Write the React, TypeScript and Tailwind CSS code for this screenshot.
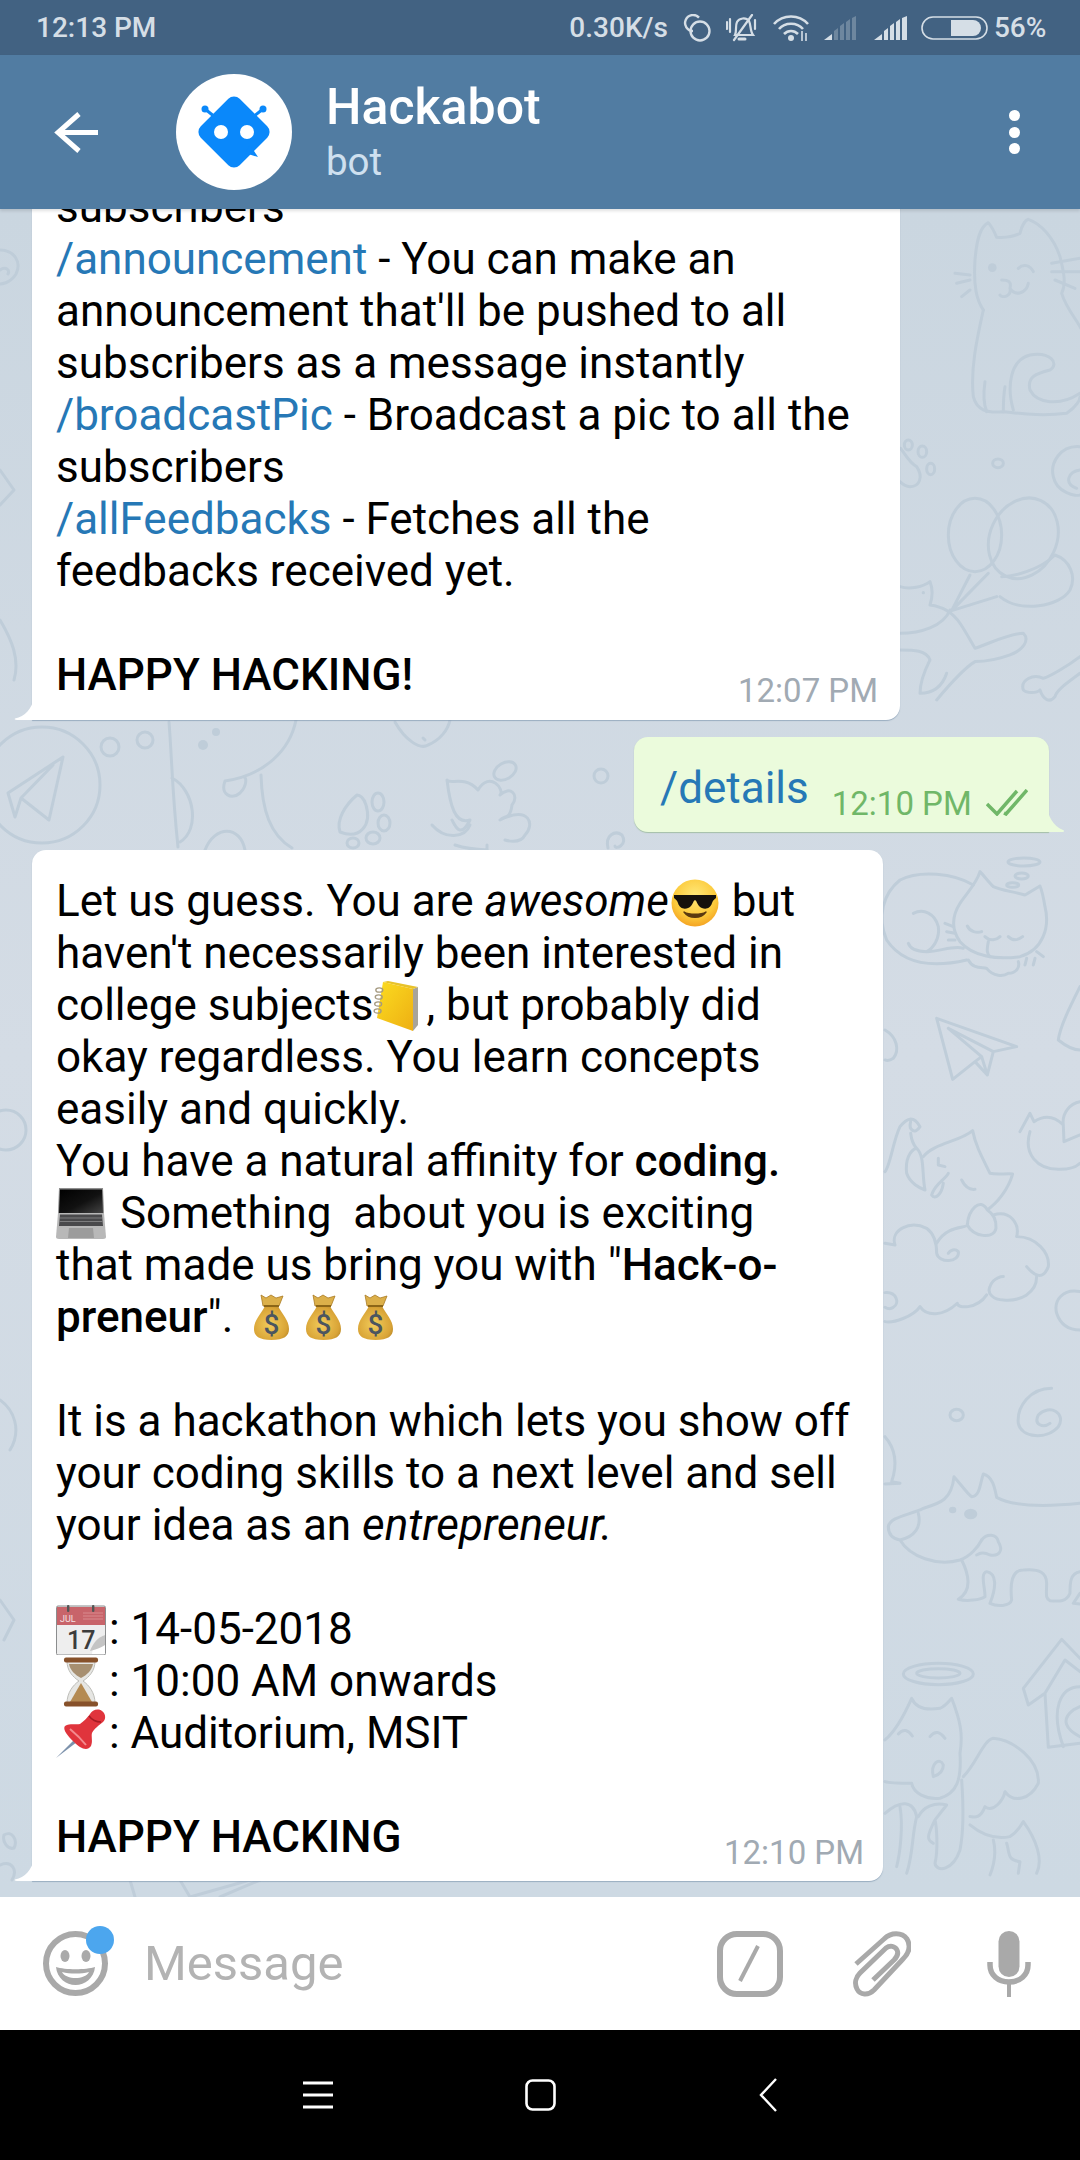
import React from "react";

const BG_STROKE = "#bfcdd9";

// wallpaper, drawn in screen coordinates (the chat area starts at y=209)
function Wallpaper() {
  return (
    <svg
      className="absolute inset-0"
      width="1080"
      height="1688"
      viewBox="0 209 1080 1688"
      fill="none"
      stroke={BG_STROKE}
      strokeWidth="3"
      strokeLinecap="round"
      strokeLinejoin="round"
    >
      {/* top right column */}
      <g transform="translate(880,200) scale(0.3333)" strokeWidth="9">
        <path d="M310 330C290 300 280 260 285 180C290 120 300 80 325 68C335 80 345 100 350 112C380 115 400 110 420 100C425 80 435 60 445 58C480 70 520 110 540 170C550 210 560 250 545 280C560 330 600 370 610 400" />
        <path d="M310 330C295 400 270 500 280 590C290 630 320 640 370 635C420 640 480 650 560 640C590 620 600 600 600 590" />
        <path d="M400 630C380 560 390 480 450 465C510 455 540 490 510 510C470 520 440 530 450 570C470 610 540 620 600 580" />
        <path d="M315 545C310 580 310 610 320 635M375 560C370 590 370 620 370 635" />
        <circle cx="337" cy="203" r="13" fill={BG_STROKE} stroke="none" />
        <path d="M415 205C430 190 450 195 460 215M365 240C385 240 395 245 390 265C395 290 365 295 360 285M390 265C405 290 440 280 445 250" />
        <path d="M225 220L270 225M230 250L270 240M245 290L270 270M515 190L600 175M515 215L600 215M525 240L585 265" />
        <path d="M62 745C80 770 90 790 110 800C130 830 120 860 90 860C75 860 65 850 60 845" />
        <ellipse cx="85" cy="735" rx="12" ry="15" />
        <ellipse cx="127" cy="755" rx="13" ry="17" />
        <ellipse cx="152" cy="807" rx="12" ry="17" />
        <ellipse cx="354" cy="790" rx="16" ry="13" />
        <path d="M600 740C540 735 510 790 520 830C530 880 590 890 600 885M600 810C565 815 550 850 590 865" />
        <ellipse cx="285" cy="1005" rx="80" ry="110" />
        <ellipse cx="430" cy="1015" rx="100" ry="125" transform="rotate(25 430 1015)" />
        <path d="M365 1130C400 1130 480 1110 525 1065C570 1080 590 1130 570 1170C540 1220 420 1240 360 1190" />
        <path d="M270 1125L215 1232L325 1120M350 1190L215 1232" />
        <path d="M60 1160C90 1170 130 1160 150 1145C160 1170 155 1200 150 1215C190 1220 220 1240 240 1270C260 1300 270 1320 285 1345C330 1330 390 1300 430 1300C450 1320 430 1350 390 1365C350 1380 310 1385 285 1385C260 1400 220 1440 170 1500" />
        <path d="M60 1300C120 1300 190 1280 210 1230M60 1350C100 1350 140 1350 150 1380C130 1420 120 1450 120 1480M200 1420C190 1450 170 1480 120 1480" />
        <path d="M600 1370C560 1400 510 1430 490 1435C460 1420 420 1440 430 1470C440 1480 470 1480 480 1470C490 1500 510 1510 525 1490C530 1470 560 1450 600 1420" />
        <circle cx="130" cy="1178" r="5" fill={BG_STROKE} stroke="none" />
      </g>

      {/* middle right column */}
      <g transform="translate(880,820) scale(0.3333)" strokeWidth="9">
        <path d="M280 195C220 160 120 150 60 180C10 220 -10 290 20 360C60 420 130 450 260 420" />
        <path d="M300 155C290 190 260 220 240 250C215 290 215 330 240 365C280 410 350 420 420 410C490 390 510 320 495 260C490 230 485 210 480 198C460 210 445 220 435 225C400 215 360 210 340 200C325 185 310 165 300 155" />
        <path d="M100 280C130 265 165 280 175 320C180 355 160 385 140 395C110 395 90 385 85 370M140 395C180 395 220 375 250 385" />
        <ellipse cx="432" cy="126" rx="48" ry="12" />
        <ellipse cx="425" cy="168" rx="20" ry="9" />
        <ellipse cx="398" cy="195" rx="18" ry="7" />
        <path d="M262 318C270 335 290 340 305 335M385 350C400 365 415 360 428 350M315 350C330 365 350 360 360 350M325 365C320 390 320 400 330 410" />
        <path d="M265 420C280 450 310 440 320 445C340 470 370 470 385 460C410 460 420 440 415 425" />
        <path d="M195 310L220 320M200 335L225 340M205 360L225 360M440 415L435 435M465 415L460 435M470 395L490 410" />
        <path d="M170 595L410 680L340 695L322 765L285 725L218 778ZM205 625L340 695M205 625L305 710L285 725M305 710L322 765" />
        <path d="M600 500C570 560 540 620 535 660C560 680 580 690 600 690" />
        <path d="M420 935L450 880L462 905C500 880 530 895 550 915C545 880 570 850 600 845M450 935C430 1000 470 1050 540 1048C570 1048 590 1040 600 1030M550 915L552 965L600 945" />
        <path d="M15 1055C30 1040 40 960 60 920C80 895 100 885 120 920C105 945 85 930 92 905M92 940C95 965 100 975 110 985C90 990 75 1020 80 1060C90 1090 120 1105 135 1110C125 1060 135 1010 110 985M130 1010C160 970 240 965 278 932C285 970 300 1000 330 1060C350 1065 380 1060 398 1062C385 1110 350 1150 322 1170C300 1130 265 1170 262 1215C280 1250 340 1260 348 1225C350 1190 330 1175 322 1170" />
        <path d="M175 1015L175 1035L195 1040M245 1080C255 1100 270 1110 285 1108M205 1060C195 1080 165 1090 155 1125C165 1140 185 1125 190 1090" />
        <path d="M15 1270L45 1275C30 1230 90 1200 140 1225C160 1240 170 1265 170 1300C175 1330 240 1330 235 1295C225 1285 210 1290 205 1300M170 1270C200 1215 260 1225 262 1215M340 1185C390 1170 420 1210 410 1250C470 1250 510 1300 505 1340C490 1380 465 1370 440 1340M470 1370C470 1420 420 1445 370 1440C340 1440 320 1420 330 1400C340 1370 370 1370 370 1370M320 1425C290 1470 230 1465 232 1450C190 1490 140 1490 120 1460C100 1490 40 1510 15 1505" />
        <path d="M15 1418C50 1415 60 1450 40 1462C30 1470 20 1465 15 1462" />
        <path d="M15 630C50 650 60 690 40 715C30 722 20 722 15 720" />
        <path d="M600 1415C550 1405 520 1440 530 1480C540 1510 560 1530 600 1530" />
      </g>

      {/* bottom right column */}
      <g transform="translate(880,1360) scale(0.3333)" strokeWidth="9">
        <ellipse cx="230" cy="165" rx="20" ry="17" />
        <path d="M515 85C450 85 410 140 415 190C425 235 500 240 535 200C560 160 510 130 475 165C460 195 490 205 510 190" />
        <path d="M15 230C50 270 50 320 35 365L60 370L15 372" />
        <path d="M25 500C30 470 90 465 130 445C180 430 215 420 222 350C240 370 265 405 275 410C300 410 300 370 310 342C340 350 345 390 350 412C400 440 500 440 600 430" />
        <path d="M115 460C125 500 105 530 60 540C35 535 25 520 25 500M60 540C90 590 170 620 240 600C270 590 295 560 305 540" />
        <ellipse cx="218" cy="450" rx="11" ry="10" fill={BG_STROKE} stroke="none" />
        <ellipse cx="272" cy="462" rx="20" ry="16" fill={BG_STROKE} stroke="none" />
        <path d="M305 540C320 520 350 520 355 545C370 570 360 590 330 585C310 575 300 580 290 585" />
        <path d="M245 600C265 640 280 690 235 718C260 725 300 720 315 710C315 680 300 640 320 635C350 640 350 680 330 730C350 740 390 740 395 720C390 670 395 630 430 630C480 625 500 640 500 670C500 700 495 715 510 722C540 725 560 725 570 700C570 670 570 640 600 635M600 700L580 730L600 732" />
        <ellipse cx="175" cy="942" rx="105" ry="32" />
        <ellipse cx="175" cy="940" rx="65" ry="14" />
        <path d="M600 895L545 838L430 985L445 1035L495 1000L505 1162L600 1150M600 935L555 900L495 1000" />
        <path d="M600 980C540 980 510 1050 550 1160M600 1130C560 1110 540 1080 580 1050L600 1040" />
        <path d="M15 1140C50 1110 75 1060 95 1015C110 1050 150 1050 180 1045C195 1040 210 1020 215 1015C240 1080 250 1120 240 1180C245 1260 230 1300 180 1315C140 1320 100 1300 95 1270C60 1270 30 1270 15 1265" />
        <path d="M55 1122C70 1105 85 1110 97 1128M150 1130C165 1110 180 1115 195 1135M160 1250C150 1210 180 1190 190 1215C190 1235 175 1245 160 1250" />
        <path d="M250 1250C290 1210 310 1140 340 1135C400 1140 480 1200 475 1270C450 1320 400 1330 375 1295C370 1320 340 1360 315 1340C300 1380 280 1370 270 1370" />
        <path d="M245 1260C250 1330 250 1420 240 1470C220 1530 170 1540 165 1510C175 1470 170 1400 165 1380M15 1360C60 1320 100 1320 110 1370C95 1430 100 1480 80 1540M115 1370C130 1340 165 1325 200 1335L165 1380C140 1430 140 1440 160 1450M60 1340C70 1400 60 1480 50 1520" />
        <path d="M270 1395C300 1420 340 1440 390 1430C420 1410 425 1390 430 1385C470 1440 490 1500 470 1540M340 1440C350 1480 340 1520 330 1545M380 1450C390 1480 380 1500 420 1505L415 1540" />
      </g>

      {/* gap between first bubble and the third one */}
      <circle cx="42" cy="785" r="58" />
      <path d="M63 757L8 793L15 817L21 798L49 820ZM53 765L21 798" />
      <circle cx="110" cy="747" r="9" />
      <circle cx="145" cy="740" r="8" />
      <path d="M169 722C172 760 172 790 178 847M172 778C195 790 200 830 180 842" />
      <path d="M296 720C290 750 265 775 225 781C220 795 232 800 240 793C248 785 246 776 244 777M261 775C262 810 270 835 292 848M205 850C215 825 240 825 245 850" />
      <circle cx="216" cy="732" r="4" fill={BG_STROKE} stroke="none" />
      <circle cx="203" cy="745" r="5" fill={BG_STROKE} stroke="none" />
      <path d="M395 722C405 740 420 750 428 745C440 740 448 730 450 720M423 738L425 740" />
      <path d="M357 795C345 805 336 820 340 832C360 840 372 825 366 805C364 798 360 795 357 795Z" />
      <ellipse cx="378" cy="802" rx="6" ry="9" />
      <ellipse cx="384" cy="823" rx="6" ry="8" />
      <ellipse cx="373" cy="838" rx="7" ry="6" />
      <ellipse cx="353" cy="843" rx="6" ry="5" />
      <path d="M478 790C465 775 450 785 447 780C450 805 455 825 470 820C460 840 455 825 452 820M478 790C490 770 505 790 500 795C510 785 520 795 512 805C510 820 505 815 500 820C530 805 535 825 525 835C520 845 505 840 505 840" />
      <ellipse cx="505" cy="771" rx="12" ry="8" transform="rotate(-30 505 771)" />
      <path d="M432 825C445 840 465 838 470 825M455 845C470 850 490 850 487 850L487 845" />
      <circle cx="601" cy="776" r="7" />
      <path d="M608 848C605 835 615 830 622 835C628 845 615 850 615 846" />

      {/* left strip */}
      <path d="M0 250C14 250 22 262 16 274C10 284 0 284 0 284M0 270C6 266 10 270 8 274" />
      <path d="M0 470L14 490L0 505M0 620C12 640 20 660 14 680" />
      <circle cx="6" cy="1130" r="20" />
      <path d="M0 1400C14 1410 22 1430 10 1450M0 1600L14 1620L4 1640" />
      <path d="M4 1835C12 1830 18 1840 14 1848C8 1850 2 1842 4 1835M0 1865C12 1860 18 1870 12 1880" />
      <path d="M130 1880L135 1897M180 1880L190 1897L250 1880M260 1880L220 1897" />
    </svg>
  );
}

function SmileEmoji() {
  return (
    <svg className="inline-block align-[-11px] mx-[2px]" width="48" height="48" viewBox="0 0 48 48">
      <defs>
        <radialGradient id="face" cx="50%" cy="35%" r="70%">
          <stop offset="0%" stopColor="#ffe97a" />
          <stop offset="65%" stopColor="#fcc93a" />
          <stop offset="100%" stopColor="#f29a1e" />
        </radialGradient>
      </defs>
      <circle cx="24" cy="24" r="23.5" fill="url(#face)" />
      <path d="M3 16H45V19C44 20 42 21 41 24C39 31 32 31 28 27C26 25 26 22 24 21C22 22 22 25 20 27C16 31 9 31 7 24C6 21 4 20 3 19Z" fill="#15110c" />
      <path d="M13 33C18 40 30 40 35 33C30 36 18 36 13 33Z" fill="#5b3a10" stroke="#5b3a10" strokeWidth="1.4" strokeLinejoin="round" />
    </svg>
  );
}

function NotebookEmoji() {
  return (
    <svg className="inline-block align-[-11px] mr-[7px]" width="46" height="50" viewBox="0 0 46 50">
      <defs>
        <linearGradient id="nb" x1="0" y1="0" x2="1" y2="1">
          <stop offset="0%" stopColor="#fbdc20" />
          <stop offset="100%" stopColor="#eeaf13" />
        </linearGradient>
      </defs>
      <path d="M40 8L45 6V44L40 50Z" fill="#a8a49a" />
      <path d="M10 1L15 0L45 6L40 8Z" fill="#e8c22a" />
      <path d="M10 1L40 8V50L4 37Z" fill="url(#nb)" />
      {[9, 16, 23, 30].map((y) => (
        <ellipse key={y} cx={7 - y * 0.08} cy={y} rx="3.5" ry="2.2" fill="none" stroke="#a59a80" strokeWidth="1.3" />
      ))}
    </svg>
  );
}

function LaptopEmoji() {
  return (
    <svg className="inline-block align-[-11px] mr-[3px]" width="50" height="51" viewBox="0 0 50 51">
      <defs>
        <linearGradient id="lp" x1="0" y1="0" x2="1" y2="1">
          <stop offset="0%" stopColor="#000" />
          <stop offset="55%" stopColor="#111" />
          <stop offset="100%" stopColor="#444" />
        </linearGradient>
      </defs>
      <path d="M3 0H47L48 25H2Z" fill="#8f8f8f" />
      <path d="M4 1.5H46L47 25H3Z" fill="url(#lp)" />
      <path d="M2 25H48L50 49C50 50 49 51 47 51H3C1 51 0 50 0 49Z" fill="#b8b8b8" />
      <path d="M4 26.5H46L47 38H3Z" fill="#49494b" />
      <path d="M4 30H46M3.6 33.5H46.4" stroke="#8a8a8c" strokeWidth="0.8" />
      <path d="M13 40H37L38 50H12Z" fill="#9c9c9c" />
    </svg>
  );
}

function MoneyBag({ uid }: { uid: string }) {
  return (
    <svg className="inline-block align-[-8px]" width="41" height="46" viewBox="1 0 41 46">
      <defs>
        <radialGradient id={uid} cx="45%" cy="55%" r="70%">
          <stop offset="0%" stopColor="#f2cc5a" />
          <stop offset="70%" stopColor="#d9a437" />
          <stop offset="100%" stopColor="#a97a22" />
        </radialGradient>
      </defs>
      <path d="M11 1L16 4L21 1L26 4L33 2L29 12L13 12Z" fill="#dcb04a" stroke="#a97a22" strokeWidth="0.8" />
      <path d="M15 12H28C32 20 39 26 39 35C39 42 34 46 21.5 46C9 46 4 42 4 35C4 26 11 20 15 12Z" fill={`url(#${uid})`} />
      <path d="M14 12H29" stroke="#8c6618" strokeWidth="2" />
      <text x="21.5" y="40" textAnchor="middle" fontFamily="Roboto, sans-serif" fontWeight="500" fontSize="28" fill="#4b5560">$</text>
    </svg>
  );
}

function CalendarEmoji() {
  return (
    <svg className="inline-block align-[-11px] mr-[3px]" width="50" height="50" viewBox="0 0 50 50">
      <rect x="0.5" y="1" width="49" height="49" rx="1.5" fill="#eeeeee" stroke="#8b8d8e" />
      <rect x="1" y="2" width="48" height="18" fill="#c8646a" />
      <text x="4" y="17" fontFamily="Roboto, sans-serif" fontSize="9" fill="#f5e2e2">JUL</text>
      <path d="M27 8H47M27 11H47M27 14H47" stroke="#d98a8e" strokeWidth="1" />
      <rect x="11" y="0" width="2.4" height="7" rx="1" fill="#555" />
      <rect x="36" y="0" width="2.4" height="7" rx="1" fill="#555" />
      <text x="11" y="44" fontFamily="Roboto, sans-serif" fontSize="25" fontWeight="500" fill="#3c3c3c">17</text>
      <path d="M49 30C42 32 37 38 36 49L49 49Z" fill="#ffffff" />
      <path d="M49 30C42 32 37 38 34 46C42 44 46 42 49 40Z" fill="#c4c4c4" />
    </svg>
  );
}

function HourglassEmoji() {
  return (
    <svg className="inline-block align-[-11px] mr-[3px]" width="50" height="50" viewBox="0 0 50 50">
      <path d="M11 4H39C39 14 33 20 27 24C33 28 39 36 39 46H11C11 36 17 28 23 24C17 20 11 14 11 4Z" fill="#e6e6e3" stroke="#bdbdb8" />
      <path d="M13 7H37C36 13 31 18 25 21C19 18 14 13 13 7Z" fill="#a78f70" />
      <path d="M25 26L36 45H14Z" fill="#b48a52" />
      <rect x="8" y="0.5" width="34" height="5" rx="2" fill="#87512a" />
      <rect x="8" y="44.5" width="34" height="5" rx="2" fill="#87512a" />
    </svg>
  );
}

function PinEmoji() {
  return (
    <svg className="inline-block align-[-11px] mr-[3px]" width="50" height="50" viewBox="0 0 50 50">
      <path d="M0 49L18 31L21 33Z" fill="#7d92ac" />
      <path d="M9 17C14 14 20 16 24 15C27 13 32 8 34 5C36 1 42 -1 46 2C50 5 50 10 47 13C43 16 38 20 36 24C35 28 37 32 35 37C31 43 24 39 18 33C13 28 6 21 9 17Z" fill="#e0343c" />
      <path d="M33 7C36 11 40 13 45 13" stroke="#a51b23" strokeWidth="1.5" fill="none" />
      <path d="M14 20C20 25 26 31 30 36" stroke="#f38a8e" strokeWidth="2" fill="none" />
    </svg>
  );
}

function TimeLabel({ children }: { children: React.ReactNode }) {
  return <span className="block text-[33px] leading-[40px] text-[#a1aab3]">{children}</span>;
}

function TailLeft() {
  return (
    <svg className="absolute -left-[18px] bottom-0" width="20" height="22" viewBox="0 0 20 22">
      <path d="M20 0C18 10 11 19 1 20.5C0 21 1 22 3 22H20Z" fill="#fff" />
    </svg>
  );
}

const Cmd = ({ children }: { children: React.ReactNode }) => <span className="text-[#2678b6]">{children}</span>;

export default function App() {
  return (
    <div className="w-[1080px] h-[2160px] flex flex-col overflow-hidden font-[Roboto,sans-serif] bg-white">
      {/* status bar */}
      <div className="h-[55px] shrink-0 bg-[#426282] flex items-center pl-[36px] text-[#d5dee6] text-[28px] font-medium">
        <span>12:13 PM</span>
        <span className="ml-[413px]">0.30K/s</span>
        <svg className="ml-[15px]" width="28" height="28" viewBox="0 0 28 28" fill="none" stroke="#d5dee6" strokeWidth="2.4">
          <path d="M10 17A8 8 0 1 1 16 3.6" />
          <circle cx="17" cy="17" r="9.5" />
        </svg>
        <svg className="ml-[15px]" width="32" height="28" viewBox="0 0 32 28" fill="none" stroke="#d5dee6" strokeWidth="2.2" strokeLinecap="round">
          <path d="M9 21C11 17 9 12 11 8C13 4 20 3 23 7C25 11 24 17 27 21Z" />
          <path d="M13 25H19" strokeWidth="3" />
          <path d="M8 26L26 1M1 8V15M4 5V18M29 6V15" />
        </svg>
        <svg className="ml-[15px]" width="36" height="28" viewBox="0 0 36 28" fill="none" stroke="#d5dee6" strokeWidth="2.6">
          <path d="M1 10C10 0 26 0 35 10M6 15C12 8 24 8 30 15M11 20C15 16 21 16 25 20" />
          <circle cx="18" cy="24" r="3" fill="#d5dee6" stroke="none" />
          <path d="M29 17V27M33 19V27" strokeWidth="1.6" />
        </svg>
        <svg className="ml-[15px]" width="34" height="24" viewBox="0 0 34 24">
          <path d="M0 24L8 18V24Z" fill="#d5dee6" />
          <g fill="#d5dee6" opacity="0.3">
            <path d="M10 15L14 12V24H10ZM16 10L20 7V24H16ZM22 6L26 3V24H22ZM28 2L32 0V24H28Z" />
          </g>
        </svg>
        <svg className="ml-[16px]" width="34" height="24" viewBox="0 0 34 24" fill="#d5dee6">
          <path d="M0 24L8 18V24ZM10 15L14 12V24H10ZM16 10L20 7V24H16ZM22 6L26 3V24H22ZM28 2L33 0V24H28Z" />
        </svg>
        <svg className="ml-[13px]" width="67" height="24" viewBox="0 0 67 24">
          <rect x="1" y="1" width="65" height="22" rx="11" fill="none" stroke="#d5dee6" strokeWidth="1.6" />
          <path d="M30 4H52A8 8 0 0 1 52 20H30Z" fill="#d5dee6" />
        </svg>
        <span className="ml-[6px]">56%</span>
      </div>

      {/* header */}
      <div className="h-[154px] shrink-0 bg-[#517ca2] flex items-center pl-[54px] relative z-10 shadow-[0_2px_3px_rgba(0,0,0,0.12)]">
        <svg width="44" height="41" viewBox="0 0 44 41" fill="none" stroke="#fff" strokeWidth="5">
          <path d="M44 20.5H4M25 2L4 20.5L25 39" />
        </svg>
        <div className="w-[116px] h-[116px] rounded-full bg-white ml-[78px] flex items-center justify-center">
          <svg width="84" height="84" viewBox="0 0 84 84">
            <rect x="14.5" y="14.5" width="55" height="55" rx="8" transform="rotate(45 42 42)" fill="#0a88fa" />
            <path d="M13 19L23 27M71 19L61 27" stroke="#0a88fa" strokeWidth="3" />
            <circle cx="13" cy="19" r="3.5" fill="#0a88fa" />
            <circle cx="71" cy="19" r="3.5" fill="#0a88fa" />
            <path d="M58 55L66 67L53 63Z" fill="#0a88fa" />
            <circle cx="29" cy="42" r="7" fill="#fff" />
            <circle cx="55" cy="42" r="7" fill="#fff" />
          </svg>
        </div>
        <div className="ml-[34px] flex flex-col">
          <span className="text-[50px] leading-[56px] font-medium text-white -mt-[2px]">Hackabot</span>
          <span className="text-[38.5px] leading-[44px] text-[#cfe0ef] mt-[5px]">bot</span>
        </div>
        <div className="ml-auto mr-[60px] flex flex-col gap-[5.5px]">
          <div className="w-[11px] h-[11px] rounded-full bg-white" />
          <div className="w-[11px] h-[11px] rounded-full bg-white" />
          <div className="w-[11px] h-[11px] rounded-full bg-white" />
        </div>
      </div>

      {/* chat */}
      <div className="flex-1 min-h-0 relative overflow-hidden flex flex-col justify-end pb-[16px] bg-gradient-to-b from-[#cad6e0] via-[#d4dce5] to-[#cdd9e3]">
        <Wallpaper />

        <div className="relative ml-[32px] w-[868px] shrink-0 bg-white rounded-[14px] rounded-bl-none pl-[24px] pt-[25px] pb-[19px] text-[44px] leading-[52px] text-black whitespace-nowrap shadow-[0_1px_1px_rgba(120,145,170,0.6)]">
          <TailLeft />
          subscribers<br />
          <Cmd>/announcement</Cmd> - You can make an<br />
          announcement that'll be pushed to all<br />
          subscribers as a message instantly<br />
          <Cmd>/broadcastPic</Cmd> - Broadcast a pic to all the<br />
          subscribers<br />
          <Cmd>/allFeedbacks</Cmd> - Fetches all the<br />
          feedbacks received yet.<br />
          <br />
          <span className="font-medium">HAPPY HACKING!</span>
          <div className="absolute right-[22px] bottom-[9px]"><TimeLabel>12:07 PM</TimeLabel></div>
        </div>

        <div className="relative self-end mr-[31px] mt-[17px] h-[95px] w-[415px] shrink-0 bg-[#ebfbdc] rounded-[14px] rounded-br-none flex items-start pl-[26px] pt-[25px] shadow-[0_1px_1px_rgba(120,165,110,0.5)]">
          <span className="text-[44px] leading-[52px] text-[#2678b6]">/details</span>
          <span className="ml-[23px] mt-[22px] text-[33px] leading-[40px] text-[#70b768]">12:10 PM</span>
          <svg className="ml-[14px] mt-[27px]" width="42" height="27" viewBox="0 0 42 27" fill="none" stroke="#70b768" strokeWidth="3.5">
            <path d="M1 15L11 25L31 2M18 24L20 25L41 1" />
          </svg>
          <svg className="absolute -right-[16px] bottom-0" width="18" height="26" viewBox="0 0 18 26">
            <path d="M0 0C1 10 6 20 16 24C18 25 17 26 15 26H0Z" fill="#ebfbdc" />
          </svg>
        </div>

        <div className="relative ml-[32px] mt-[18px] w-[851px] shrink-0 bg-white rounded-[14px] rounded-bl-none pl-[24px] pt-[25px] pb-[18px] text-[44px] leading-[52px] text-black whitespace-nowrap shadow-[0_1px_1px_rgba(120,145,170,0.6)]">
          <TailLeft />
          Let us guess. You are <i>awesome</i><SmileEmoji /> but<br />
          haven't necessarily been interested in<br />
          college subjects<NotebookEmoji />, but probably did<br />
          okay regardless. You learn concepts<br />
          easily and quickly.<br />
          You have a natural affinity for <span className="font-medium">coding.</span><br />
          <LaptopEmoji /> Something&nbsp; about you is exciting<br />
          that made us bring you with "<span className="font-medium">Hack-o-</span><br />
          <span className="font-medium">preneur</span>". <span className="ml-[7px]"><MoneyBag uid="bag1" /></span> <MoneyBag uid="bag2" /> <MoneyBag uid="bag3" /><br />
          <br />
          It is a hackathon which lets you show off<br />
          your coding skills to a next level and sell<br />
          your idea as an <i>entrepreneur.</i><br />
          <br />
          <CalendarEmoji />: 14-05-2018<br />
          <HourglassEmoji />: 10:00 AM onwards<br />
          <PinEmoji />: Auditorium, MSIT<br />
          <br />
          <span className="font-medium">HAPPY HACKING</span>
          <div className="absolute right-[19px] bottom-[8px]"><TimeLabel>12:10 PM</TimeLabel></div>
        </div>
      </div>

      {/* input bar */}
      <div className="h-[133px] shrink-0 bg-white flex items-center pl-[43px] pr-[49px]">
        <div className="relative w-[65px] h-[65px] shrink-0">
          <svg width="65" height="65" viewBox="0 0 65 65">
            <circle cx="32.5" cy="32.5" r="29.5" fill="none" stroke="#a9a9a9" strokeWidth="6" />
            <ellipse cx="22" cy="25" rx="4.5" ry="6" fill="#a9a9a9" />
            <ellipse cx="43" cy="25" rx="4.5" ry="6" fill="#a9a9a9" />
            <path d="M13 36C22 39 43 39 52 36C51 47 42 54 32.5 54C23 54 14 47 13 36Z" fill="#a9a9a9" />
            <path d="M19 41C27 43 38 43 46 41C44 45 38 47 32.5 47C27 47 21 45 19 41Z" fill="#fff" />
          </svg>
          <div className="absolute left-[43px] -top-[5px] w-[28px] h-[28px] rounded-full bg-[#4ca6ee]" />
        </div>
        <span className="ml-[36px] text-[49px] text-[#b3b3b3]">Message</span>
        <svg className="ml-auto" width="66" height="66" viewBox="0 0 66 66" fill="none" stroke="#a9a9a9">
          <rect x="3" y="3" width="60" height="60" rx="17" strokeWidth="6" />
          <path d="M41 15L23 50" strokeWidth="4" />
        </svg>
        <svg className="ml-[70px]" width="58" height="66" viewBox="0 0 58 66" fill="none" stroke="#a9a9a9" strokeWidth="5" strokeLinejoin="round">
          <path d="M3 33L31 8C38 1 49 1 54 8C58 15 56 22 50 28L21 59C15 65 7 64 4 58C1 52 3 46 7 42L33 17C37 14 42 15 44 19C46 23 44 26 41 29L20 49" />
        </svg>
        <svg className="ml-[76px]" width="44" height="66" viewBox="0 0 44 66" fill="#a9a9a9">
          <rect x="11.5" y="0" width="21" height="46" rx="10.5" />
          <path d="M3 31V34C3 44 11 51 22 51C33 51 41 44 41 34V31" fill="none" stroke="#a9a9a9" strokeWidth="5.5" />
          <rect x="20" y="50" width="4" height="16" />
        </svg>
      </div>

      {/* android nav */}
      <div className="h-[130px] shrink-0 bg-black flex items-center pl-[303px]">
        <svg width="30" height="28" viewBox="0 0 30 28" className="-mt-[1px]" fill="none" stroke="#fff" strokeWidth="3">
          <path d="M0 2H30M0 14H30M0 26H30" />
        </svg>
        <svg className="ml-[192px]" width="31" height="32" viewBox="0 0 31 32" fill="none" stroke="#fff" strokeWidth="2.6">
          <rect x="1.5" y="1.5" width="28" height="29" rx="6" />
        </svg>
        <svg className="ml-[203px]" width="18" height="34" viewBox="0 0 18 34" fill="none" stroke="#fff" strokeWidth="2.4">
          <path d="M17 1L2 17L17 33" />
        </svg>
      </div>
    </div>
  );
}
